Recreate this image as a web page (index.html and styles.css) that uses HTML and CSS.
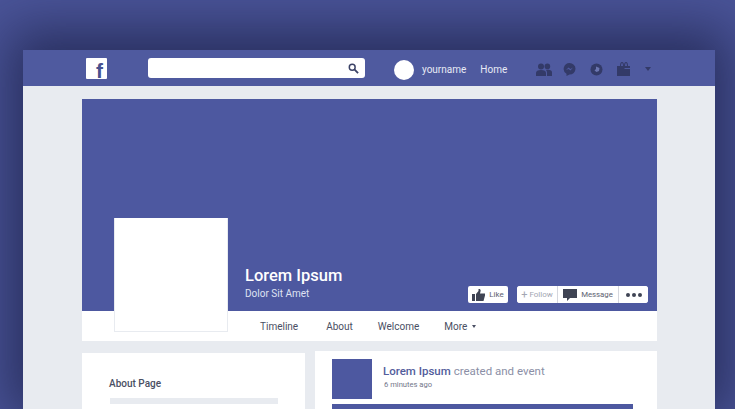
FILE: index.html
```html
<!DOCTYPE html>
<html lang="en">
    <head>
        <meta charset="UTF-8">
        <meta name="viewport" content="width=device-width, initial-scale=1.0">
        <title>Facebook page mockup</title>
        <link rel="stylesheet" href="styles.css">
    </head>
    <body>
        <div class="window">
            <header class="topbar">
                <div class="logo">f</div>
                <div class="search">
                    <svg width="11" height="11" viewBox="0 0 12 12"><circle cx="4.6" cy="4.6" r="3.2" fill="none" stroke="#3b4266" stroke-width="1.6"/><path d="M7 7l4 4" stroke="#3b4266" stroke-width="2"/></svg>
                </div>
                <div class="avatar"></div>
                <span class="username">yourname</span>
                <span class="home">Home</span>
                <div class="icons">
                    <svg width="16" height="13" viewBox="0 0 16 13"><circle cx="5" cy="3.4" r="3"/><circle cx="11.4" cy="3.4" r="2.8"/><path d="M0 13V10q0-3 5-3t5 3v3zM11 13V9.5q0-1.500-1-2.500 6-.8 6 2.500v3.500z"/></svg>
                    <svg width="13" height="13" viewBox="0 0 13 13"><path d="M6.500 0a6 5.800 0 0 1 0 11.600L3.500 13v-2.300A6 5.800 0 0 1 6.500 0z"/><path d="M3 7l2.500-2.500 2 1.500L10 4.500 7.500 7.500l-2-1.500z" fill="#4f5a9f"/></svg>
                    <svg width="13" height="13" viewBox="0 0 13 13"><circle cx="6.500" cy="6.500" r="6"/><path d="M6 3.500l3.500 1.500-.5 3-2.500 1-2-1.500 1.500-1.500z" fill="#6b75b0"/></svg>
                    <svg width="13" height="14" viewBox="0 0 13 14"><path d="M0 4h13v10H0zM3 4q0-4 2-4t2 4h-1q0-3-1-3t-1 3zM7 4q0-4 2-4t2 4h-1q0-3-1-3t-1 3z"/><path d="M7.500 6h5.500v1H7.500z" fill="#4f5a9f"/></svg>
                    <span class="caret"></span>
                </div>
            </header>

            <main class="page">
                <section class="profile">
                    <div class="cover">
                        <div class="names">
                            <h1>Lorem Ipsum</h1>
                            <p>Dolor Sit Amet</p>
                        </div>
                        <div class="actions">
                            <div class="btn like">
                                <svg width="13" height="12" viewBox="0 0 13 12"><path d="M0 5h3v7H0zM4 5l2.500-3V0h1.500l.7 1.500L8 4.500h5v2l-1.500 5.500H4z"/></svg>
                                Like
                            </div>
                            <div class="btn-group">
                                <div class="btn follow"><b>+</b> Follow</div>
                                <div class="btn message">
                                    <svg width="14" height="12" viewBox="0 0 14 12"><path d="M0 0h14v9H7l-3 3V9H0z"/></svg>
                                    Message
                                </div>
                                <div class="btn more-dots"><i></i><i></i><i></i></div>
                            </div>
                        </div>
                    </div>
                    <nav class="tabs">
                        <a class="tab-timeline">Timeline</a>
                        <a class="tab-about">About</a>
                        <a class="tab-welcome">Welcome</a>
                        <a>More <span class="tab-caret"></span></a>
                    </nav>
                    <div class="picture"></div>
                </section>

                <div class="columns">
                    <aside class="about">
                        <h2>About Page</h2>
                        <div class="line"></div>
                    </aside>
                    <article class="post">
                        <div class="post-head">
                            <div class="post-thumb"></div>
                            <div>
                                <p class="post-title"><strong>Lorem Ipsum</strong> created and event</p>
                                <p class="post-time">6 minutes ago</p>
                            </div>
                        </div>
                        <div class="post-image"></div>
                    </article>
                </div>
            </main>
        </div>
    </body>
</html>
```

FILE: styles.css
```css
*{
    margin: 0;
    padding: 0;
    box-sizing: border-box;
}
html,body{
    height: 409px;
    overflow: hidden;
}
body{
    background-color: #4a5498;
    font-family: Roboto, "Noto Sans", sans-serif;
    padding: 50px 20px 0 23px;
}
.window{
    width: 692px;
    height: 359px;
    background-color: #e8ebf0;
    box-shadow: 0 -6px 50px 14px rgba(30,35,75,0.75);
}

/* top bar */
.topbar{
    display: flex;
    align-items: center;
    height: 36px;
    padding-left: 63px;
    background-color: #4f5a9f;
}
.logo{
    width: 21px;
    height: 21px;
    padding: 4px 4px 0 0;
    background-color: #ffffff;
    border-radius: 1px;
    color: #47518f;
    font: bold 21px/17px "Liberation Sans", sans-serif;
    text-align: right;
}
.search{
    display: flex;
    align-items: center;
    justify-content: flex-end;
    width: 217px;
    height: 20px;
    margin-left: 41px;
    padding-right: 6px;
    background-color: #ffffff;
    border-radius: 3px;
}
.avatar{
    width: 20px;
    height: 20px;
    margin: 4px 0 0 29px;
    background-color: #ffffff;
    border-radius: 50%;
}
.username,.home{
    padding-top: 3px;
    color: #e8eaf5;
    font-size: 10px;
}
.username{
    margin-left: 8px;
}
.home{
    margin-left: 14px;
}
.icons{
    display: flex;
    align-items: center;
    margin: 2px 0 0 29px;
}
.icons svg{
    fill: #333a68;
}
.icons svg:nth-child(2){
    margin-left: 11px;
}
.icons svg:nth-child(3){
    margin-left: 14px;
}
.icons svg:nth-child(4){
    margin-left: 14px;
}
.caret{
    width: 0;
    height: 0;
    margin-left: 15px;
    border: 3px solid transparent;
    border-top: 4px solid #333a68;
    border-bottom: 0;
}

/* profile */
.page{
    padding: 13px 58px 0 59px;
}
.profile{
    position: relative;
}
.cover{
    display: flex;
    align-items: flex-end;
    justify-content: space-between;
    height: 212px;
    padding: 0 9px 8px 163px;
    background-color: #4d58a0;
}
.names{
    color: #ffffff;
    padding-bottom: 2px;
}
.names h1{
    font-size: 16.5px;
    line-height: 20px;
    font-weight: 500;
}
.names p{
    font-size: 10px;
    line-height: 15px;
    color: #dfe2f2;
}
.actions{
    display: flex;
    gap: 9px;
}
.btn{
    display: flex;
    align-items: center;
    justify-content: center;
    gap: 4px;
    height: 17px;
    background-color: #ffffff;
    color: #5d6170;
    font-size: 8px;
}
.btn svg{
    fill: #3f4454;
}
.like{
    width: 40px;
    border-radius: 2px;
}
.btn-group{
    display: flex;
    width: 131px;
    background-color: #ffffff;
    border-radius: 3px;
    overflow: hidden;
}
.follow{
    width: 41px;
    gap: 2px;
    color: #a3a6b2;
    border-right: 1px solid #d5d7de;
}
.follow b{
    font-size: 11px;
    font-weight: 400;
}
.message{
    width: 61px;
    border-right: 1px solid #d5d7de;
    font-size: 7.8px;
}
.more-dots{
    flex: 1;
    gap: 2px;
}
.more-dots i{
    width: 4px;
    height: 4px;
    background-color: #3f4454;
    border-radius: 50%;
}
.tabs{
    display: flex;
    align-items: center;
    height: 30px;
    padding-left: 178px;
    background-color: #ffffff;
    color: #4a4f63;
    font-size: 10px;
}
.tab-timeline{
    margin-right: 28px;
}
.tab-about{
    margin-right: 25px;
}
.tab-welcome{
    margin-right: 25px;
}
.tab-caret{
    display: inline-block;
    width: 0;
    height: 0;
    margin-left: 2px;
    vertical-align: middle;
    border: 2px solid transparent;
    border-top: 3px solid #4a4f63;
    border-bottom: 0;
}
.picture{
    position: absolute;
    left: 32px;
    top: 119px;
    width: 114px;
    height: 114px;
    background-color: #ffffff;
    border: 1px solid #e8ebf0;
    border-top: 0;
}

/* lower cards */
.columns{
    display: flex;
    align-items: flex-start;
    gap: 10px;
    margin-top: 10px;
}
.about{
    width: 223px;
    height: 56px;
    margin-top: 2px;
    padding: 25px 27px 0 27px;
    background-color: #ffffff;
}
.about h2{
    font-size: 10px;
    line-height: 12px;
    font-weight: 500;
    color: #4a4f63;
}
.line{
    width: 168px;
    height: 6px;
    margin: 8px 0 0 1px;
    background-color: #e8ebf0;
}
.post{
    flex: 1;
    height: 58px;
    padding: 8px 24px 0 17px;
    background-color: #ffffff;
}
.post-head{
    display: flex;
    gap: 11px;
}
.post-thumb{
    width: 40px;
    height: 40px;
    background-color: #4d58a0;
}
.post-title{
    margin-top: 5px;
    font-size: 11.5px;
    line-height: 14px;
    color: #8b8fa6;
}
.post-title strong{
    font-weight: 500;
    color: #535d9c;
}
.post-time{
    margin: 1px 0 0 1px;
    font-size: 7.6px;
    line-height: 12px;
    color: #73768a;
}
.post-image{
    height: 5px;
    margin-top: 5px;
    background-color: #4d58a0;
}
```
